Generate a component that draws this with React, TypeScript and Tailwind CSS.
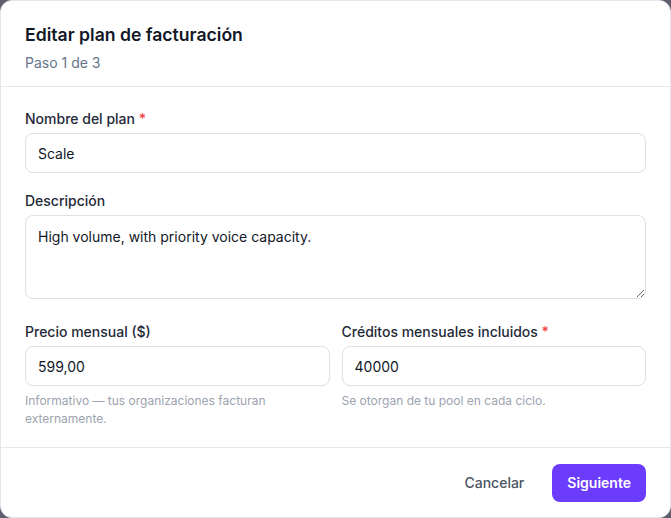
import React from "react";

export default function App() {
  const font = { fontFamily: "Inter, 'Noto Sans', sans-serif" };
  return (
    <div className="w-full h-[518px] bg-[#5f5e6e]" style={font}>
      <div className="w-full h-full bg-white rounded-xl border border-[#e3e6ec] flex flex-col overflow-hidden">
        <div className="px-6 pt-5 pb-[13px] border-b border-[#e5e7eb]">
          <h1 className="text-[17.6px] leading-7 font-semibold text-[#111827]">Editar plan de facturación</h1>
          <p className="mt-1 text-sm leading-5 text-[#64748b]">Paso 1 de 3</p>
        </div>
        <div className="px-6 pt-[22px] pb-[19px] border-b border-[#e5e7eb]">
          <label className="block text-sm leading-5 font-medium text-[#1f2937] mb-1">
            Nombre del plan <span className="text-[#ef4444]">*</span>
          </label>
          <input
            readOnly
            value="Scale"
            className="block w-full h-10 px-3 rounded-lg border border-[#dcdfe5] text-sm text-[#111827] outline-none"
          />
          <label className="block mt-[18px] text-sm leading-5 font-medium text-[#1f2937] mb-1">Descripción</label>
          <textarea
            readOnly
            value="High volume, with priority voice capacity."
            className="block w-full h-[84px] px-3 pt-[11px] rounded-lg border border-[#dcdfe5] text-sm leading-5 text-[#111827] outline-none resize-y"
          />
          <div className="grid grid-cols-2 gap-3 mt-[23px]">
            <div>
              <label className="block text-sm leading-5 font-medium text-[#1f2937] mb-1">Precio mensual ($)</label>
              <input
                readOnly
                value="599,00"
                className="block w-full h-10 px-3 rounded-lg border border-[#dcdfe5] text-sm text-[#111827] outline-none"
              />
              <p className="mt-[6px] text-xs leading-[18px] text-[#9ca3af]">
                Informativo — tus organizaciones facturan externamente.
              </p>
            </div>
            <div>
              <label className="block text-sm leading-5 font-medium text-[#1f2937] mb-1">
                Créditos mensuales incluidos <span className="text-[#ef4444]">*</span>
              </label>
              <input
                readOnly
                value="40000"
                className="block w-full h-10 px-3 rounded-lg border border-[#dcdfe5] text-sm text-[#111827] outline-none"
              />
              <p className="mt-[6px] text-xs leading-[18px] text-[#9ca3af]">Se otorgan de tu pool en cada ciclo.</p>
            </div>
          </div>
        </div>
        <div className="px-6 pt-4 flex justify-end items-center gap-3">
          <button className="h-[38px] px-4 text-sm font-medium text-[#4b5563]">Cancelar</button>
          <button className="h-[38px] px-[15px] rounded-lg bg-[#6b3cfb] text-sm font-semibold text-white">Siguiente</button>
        </div>
      </div>
    </div>
  );
}
